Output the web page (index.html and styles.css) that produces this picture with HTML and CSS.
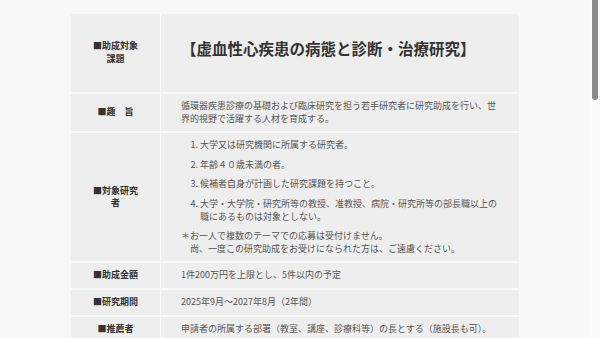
FILE: index.html
```html
<!DOCTYPE html>
<html lang="ja">
<head>
<meta charset="utf-8">
<title>研究助成 募集要項</title>
<link rel="stylesheet" href="styles.css">
</head>
<body>
<main class="page">
  <div class="outline">
    <div class="label">■助成対象課題</div>
    <div class="value value-title"><h2 class="title">【虚血性心疾患の病態と診断・治療研究】</h2></div>

    <div class="label">■趣　旨</div>
    <div class="value">循環器疾患診療の基礎および臨床研究を担う若手研究者に研究助成を行い、世界的視野で活躍する人材を育成する。</div>

    <div class="label">■対象研究者</div>
    <div class="value">
      <ol class="terms">
        <li>大学又は研究機関に所属する研究者。</li>
        <li>年齢４０歳未満の者。</li>
        <li>候補者自身が計画した研究課題を持つこと。</li>
        <li>大学・大学院・研究所等の教授、准教授、病院・研究所等の部長職以上の職にあるものは対象としない。</li>
      </ol>
      <p class="note">＊お一人で複数のテーマでの応募は受付けません。<br>　尚、一度この研究助成をお受けになられた方は、ご遠慮ください。</p>
    </div>

    <div class="label">■助成金額</div>
    <div class="value">1件200万円を上限とし、5件以内の予定</div>

    <div class="label">■研究期間</div>
    <div class="value">2025年9月～2027年8月（2年間）</div>

    <div class="label">■推薦者</div>
    <div class="value">申請者の所属する部署（教室、講座、診療科等）の長とする（施設長も可）。</div>
  </div>
</main>
<div class="scroll-track"><div class="scroll-thumb"></div></div>
</body>
</html>
```

FILE: styles.css
```css
html, body {
  margin: 0;
  padding: 0;
  height: 100%;
  overflow: hidden;
  background: #f8f8f8;
}

body {
  font-family: "Noto Sans CJK JP", "Noto Sans", sans-serif;
  font-size: 9px;
  line-height: 1.4;
  color: #555;
}

.page {
  width: 590px;
  padding-top: 14px;
}

/* two-column outline: labels on the left, details on the right */
.outline {
  width: 448px;
  margin: 0 auto;
  display: grid;
  grid-template-columns: 89px 1fr;
  row-gap: 2px;
  column-gap: 1px;
  background: #fbfbfb;
}

.label,
.value {
  background: #eeeeee;
}

.label {
  display: flex;
  align-items: center;
  justify-content: center;
  text-align: center;
  padding: 6px 20px;
  font-weight: 700;
  color: #333;
}

.value {
  padding: 6px 20px;
}

.value-title {
  padding-top: 23px;
  padding-bottom: 33px;
}

.title {
  margin: 0;
  font-size: 15.5px;
  line-height: 22px;
  font-weight: 700;
  color: #333;
}

.terms {
  margin: 0;
  padding-left: 19px;
}

.terms li + li {
  margin-top: 7px;
}

.note {
  margin: 7px 0 0;
}

/* page scrollbar */
.scroll-track {
  position: fixed;
  top: 0;
  right: 0;
  width: 10px;
  height: 100%;
  background: #fbfbfb;
}

.scroll-thumb {
  position: absolute;
  top: 0;
  left: 2px;
  width: 6px;
  height: 100px;
  background: #8b8b8b;
  border-radius: 0 0 3px 3px;
}
```
